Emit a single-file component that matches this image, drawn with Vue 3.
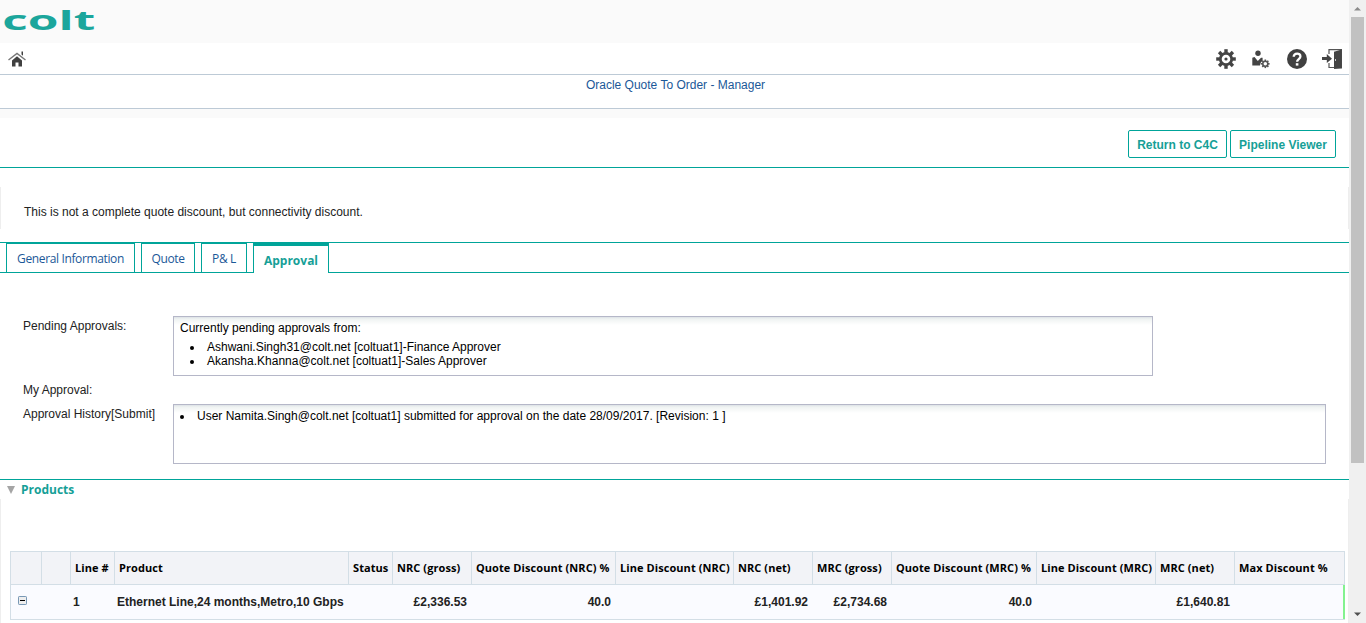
<script setup>
const columns = [
  { label: '', value: '' },
  { label: '', value: '' },
  { label: 'Line #', value: '1', kind: 'line' },
  { label: 'Product', value: 'Ethernet Line,24 months,Metro,10 Gbps', kind: 'product' },
  { label: 'Status', value: '' },
  { label: 'NRC (gross)', value: '£2,336.53' },
  { label: 'Quote Discount (NRC) %', value: '40.0' },
  { label: 'Line Discount (NRC)', value: '' },
  { label: 'NRC (net)', value: '£1,401.92' },
  { label: 'MRC (gross)', value: '£2,734.68' },
  { label: 'Quote Discount (MRC) %', value: '40.0' },
  { label: 'Line Discount (MRC)', value: '' },
  { label: 'MRC (net)', value: '£1,640.81' },
  { label: 'Max Discount %', value: '' },
]
const teeth = [0, 45, 90, 135, 180, 225, 270, 315]
</script>

<template>
  <div class="window">
    <div class="page">
      <header class="brand">
        <svg class="logo" width="90" height="20" viewBox="0 0 90 20">
          <text class="wordmark" x="-1.800" y="19.600" textLength="93" lengthAdjust="spacingAndGlyphs">colt</text>
        </svg>
      </header>
      <nav class="toolbar">
        <svg class="home" width="18" height="16" viewBox="0 0 18 16">
          <path d="M.5 9 9 2.500l8.500 6.500" fill="none" stroke="#777" stroke-width="1.400" />
          <path d="M13.500.6H15v4.200l-1.500-1.200zM4 9.500l5-4.200 5 4.200v6h-3.500v-4h-3v4H4z" fill="#404040" />
        </svg>
        <div class="tools">
          <svg width="20" height="20" viewBox="-10 -10 20 20">
            <rect v-for="t in teeth" :key="t" x="-1.700" y="-9.800" width="3.400" height="4.500" fill="#444" :transform="`rotate(${t})`" />
            <circle r="5.700" fill="#fff" stroke="#444" stroke-width="2.800" />
            <circle r="1.600" fill="#444" />
          </svg>
          <svg width="20" height="20" viewBox="0 0 20 20">
            <circle cx="7" cy="4.200" r="2.700" fill="#444" />
            <path d="M1.300 8.800 3.500 8l3.300 4L10 8.800h1.600v3L9.800 13.500 9 16.500H1.300z" fill="#444" />
            <g transform="translate(14.300 14.800)">
              <rect v-for="t in teeth" :key="t" x="-.8" y="-4.300" width="1.600" height="2" fill="#555" :transform="`rotate(${t})`" />
              <circle r="2.500" fill="#fff" stroke="#555" stroke-width="1.500" />
            </g>
          </svg>
          <svg width="20" height="20" viewBox="0 0 20 20">
            <circle cx="10" cy="10" r="10" fill="#404040" />
            <path d="M6.700 7.700C6.900 3.700 13.500 3.500 13.400 7.400c0 2.600-3.300 2.700-3.300 5.400" fill="none" stroke="#fff" stroke-width="2.300" />
            <rect x="8.800" y="14.200" width="2.600" height="2.400" fill="#fff" />
          </svg>
          <svg width="20" height="20" viewBox="0 0 20 20">
            <path d="M7 5V.7h12.500v18.200H13M7 14v4.500h5" fill="none" stroke="#555" stroke-width="1.200" />
            <path d="M12 2.700 19.700.5V19L12 20zM0 8h4.800V5l5.200 4.700L4.800 14v-3H0z" fill="#444" />
            <rect x="13" y="10" width="1" height="2" fill="#ccc" />
          </svg>
        </div>
      </nav>
      <div class="title"><span>Oracle Quote To Order - Manager</span></div>
      <div class="spacer"></div>
      <div class="actions">
        <button class="first">Return to C4C</button>
        <button class="second">Pipeline Viewer</button>
      </div>
      <div class="notice"><p>This is not a complete quote discount, but connectivity discount.</p></div>
      <div class="tabs">
        <a class="tab general">General Information</a>
        <a class="tab quote">Quote</a>
        <a class="tab pl">P&amp; L</a>
        <a class="tab active">Approval</a>
      </div>
      <section class="approval">
        <div class="field pending">
          <label>Pending Approvals:</label>
          <div class="box">
            <p>Currently pending approvals from:</p>
            <ul>
              <li>Ashwani.Singh31@colt.net [coltuat1]-Finance Approver</li>
              <li>Akansha.Khanna@colt.net [coltuat1]-Sales Approver</li>
            </ul>
          </div>
        </div>
        <div class="field mine"><label>My Approval:</label></div>
        <div class="field history">
          <label>Approval History[Submit]</label>
          <div class="box">
            <ul><li>User Namita.Singh@colt.net [coltuat1] submitted for approval on the date 28/09/2017. [Revision: 1 ]</li></ul>
          </div>
        </div>
      </section>
      <h2 class="products">
        <svg width="8" height="8" viewBox="0 0 8 8"><path d="M0 0h8L4 8z" fill="#a5a5a5" /></svg>
        <span>Products</span>
      </h2>
      <section class="list">
        <div class="grid head">
          <div v-for="(c, i) in columns" :key="i" class="cell"><span>{{ c.label }}</span></div>
        </div>
        <div class="grid row">
          <div v-for="(c, i) in columns" :key="i" class="cell" :class="c.kind">
            <svg v-if="i === 0" class="toggle" width="9" height="9" viewBox="0 0 9 9">
              <rect x=".5" y=".5" width="8" height="8" rx=".7" fill="#eee" stroke="#7898b5" />
              <path d="M2 4.500h5" stroke="#000" />
            </svg>
            <span v-else>{{ c.value }}</span>
          </div>
        </div>
      </section>
    </div>
    <aside class="scrollbar">
      <svg width="17" height="17" viewBox="0 0 17 17"><path d="M5 10.500 8.500 7l3.500 3.500z" fill="#8a8a8a" /></svg>
      <div class="thumb"></div>
      <svg class="down" width="17" height="17" viewBox="0 0 17 17"><path d="M5 6.500h7L8.500 10z" fill="#505050" /></svg>
    </aside>
  </div>
</template>

<style>
body { margin: 0; overflow: hidden; }
</style>

<style scoped>
* { box-sizing: border-box; }
.window { display: flex; width: 1366px; height: 623px; overflow: hidden; background: #fff; font: 12px/14px "Liberation Sans", Arial, sans-serif; color: #222; }
.page { width: 1349px; flex: none; }
p, ul, h2 { margin: 0; padding: 0; }
.brand { height: 43px; background: #fafafa; padding: 10px 0 0 4px; }
svg { display: block; flex: none; }
.logo { overflow: visible; }
.wordmark { font: bold 27px "Open Sans", sans-serif; fill: #1ba69c; }
.toolbar { height: 32px; border-bottom: 1px solid #bdcad6; display: flex; justify-content: space-between; align-items: center; padding: 0 7px 0 8px; }
.tools { display: flex; gap: 15.3px; }
.title { height: 34px; border-bottom: 1px solid #bdcad6; text-align: center; padding: 3px 0 0 2px; color: #1b5898; }
.spacer { height: 9px; background: #fafafa; }
.actions { height: 50px; border-bottom: 1px solid #00a499; display: flex; justify-content: flex-end; gap: 3px; padding: 12px 13px 0 0; }
button { height: 28px; padding: 2px 0 0; border: 1px solid #00a499; border-radius: 2px; background: #fff; color: #169f97; font: bold 12px/14px "Liberation Sans", Arial, sans-serif; white-space: nowrap; }
.first { width: 99px; }
.second { width: 106px; }
.notice { height: 42px; margin-top: 19px; border: solid #eee; border-width: 0 1px; padding: 18px 0 0 23px; }
.tabs { display: flex; gap: 6px; height: 31px; margin-top: 13px; padding-left: 6px; border: solid #00a499; border-width: 1px 0; font: 12px/14px "Open Sans", "Noto Sans", sans-serif; color: #1b5898; }
.tab { height: 30px; border: solid #00a499; border-width: 1px 1px 0; padding-top: 8px; text-align: center; white-space: nowrap; letter-spacing: -.37px; }
.general { width: 129px; }
.quote { width: 54px; }
.pl { width: 46px; }
.active { width: 76px; border-top-width: 3px; background: #fff; color: #169f97; font-weight: bold; letter-spacing: 0; }
.approval { padding: 43px 0 0 23px; height: 206px; }
.field { display: flex; }
.field label { width: 150px; flex: none; padding-top: 3px; }
.box { border: 1px solid #b5b7c8; background: linear-gradient(#dce2e6 0, #eff3f2 2px, #fff 8px); color: #000; height: 60px; }
.pending .box { width: 980px; padding: 4px 6px; }
.box ul { list-style: none; }
.box li { position: relative; white-space: nowrap; }
.box li::before { content: ""; position: absolute; left: -17px; top: 6px; width: 4px; height: 4px; border-radius: 50%; background: #000; }
.pending ul { padding: 5px 0 0 27px; }
.mine { height: 28px; padding-top: 4px; }
.history .box { width: 1153px; padding: 4px 0 0 23px; }
.products { display: flex; align-items: center; gap: 6px; height: 20px; padding-left: 7px; border-top: 1px solid #00a499; font: bold 12px/14px "Open Sans", sans-serif; color: #169f97; }
.list { height: 125px; border: solid #eee; border-width: 0 1px; padding: 52px 0 0 9px; }
.grid { display: grid; width: 1335px; grid-template-columns: 31px 29px 44px 234px 44px 79px 144px 118px 79px 79px 145px 119px 79px 111px; }
.cell { border-left: 1px solid #d3dee6; display: flex; align-items: center; padding: 0 4px; white-space: nowrap; }
.head { height: 34px; border: solid #d3dee6; border-width: 1px 0; background: #f2f3f7; font: bold 11px/14px "Open Sans", "Noto Sans", sans-serif; letter-spacing: .07px; color: #000; }
.head .cell:last-child { border-right: 1px solid #d3dee6; }
.row { height: 35px; background: #fafbff; border-bottom: 1px solid #d3dee6; font-weight: bold; }
.row .cell { justify-content: flex-end; border-left-color: transparent; }
.row .cell:first-child { border-left-color: #d3dee6; justify-content: flex-start; padding-left: 7px; }
.toggle { margin-bottom: 3px; }
.row .cell:last-child { border-right: 2px solid #83f28f; }
.row .line { justify-content: flex-start; padding-left: 2px; }
.row .product { justify-content: flex-start; padding-left: 2px; }
.scrollbar { width: 17px; flex: none; background: #f0f0f0; display: flex; flex-direction: column; }
.thumb { width: 13px; height: 446px; margin-left: 2px; background: #c1c1c1; }
.down { margin-top: auto; }
</style>
